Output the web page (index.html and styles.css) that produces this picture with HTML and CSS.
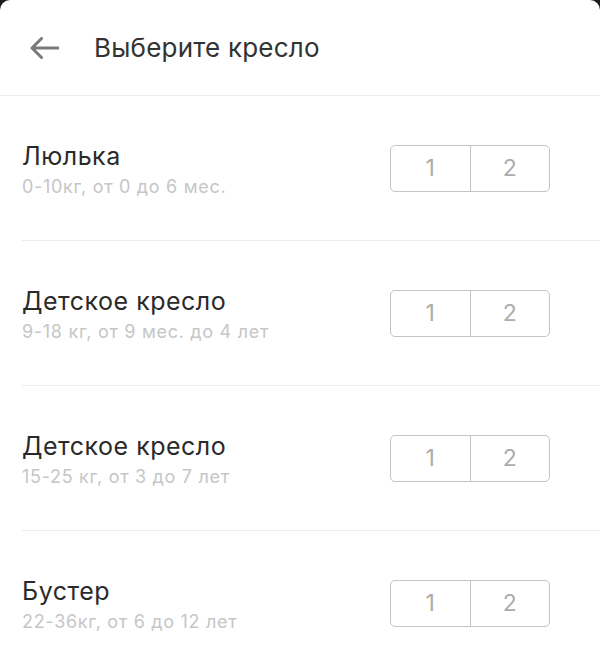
FILE: index.html
```html
<!DOCTYPE html>
<html lang="ru">
<head>
  <meta charset="UTF-8">
  <title>Выберите кресло</title>
  <link rel="stylesheet" href="styles.css">
</head>
<body>
  <div class="sheet">
    <header class="top-bar">
      <button class="back" type="button" aria-label="Назад">
        <svg width="30" height="22" viewBox="0 0 30 22">
          <path d="M29 11H3M12.5 1.5L3 11l9.5 9.5" fill="none" stroke="#7a7a7a" stroke-width="3" stroke-linecap="round" stroke-linejoin="round"/>
        </svg>
      </button>
      <h1>Выберите кресло</h1>
    </header>

    <ul class="seats">
      <li class="seat">
        <div class="seat-info">
          <div class="seat-name">Люлька</div>
          <div class="seat-desc">0-10кг, от 0 до 6 мес.</div>
        </div>
        <div class="counter">
          <button type="button">1</button>
          <button type="button">2</button>
        </div>
      </li>
      <li class="seat">
        <div class="seat-info">
          <div class="seat-name">Детское кресло</div>
          <div class="seat-desc">9-18 кг, от 9 мес. до 4 лет</div>
        </div>
        <div class="counter">
          <button type="button">1</button>
          <button type="button">2</button>
        </div>
      </li>
      <li class="seat">
        <div class="seat-info">
          <div class="seat-name">Детское кресло</div>
          <div class="seat-desc">15-25 кг, от 3 до 7 лет</div>
        </div>
        <div class="counter">
          <button type="button">1</button>
          <button type="button">2</button>
        </div>
      </li>
      <li class="seat">
        <div class="seat-info">
          <div class="seat-name">Бустер</div>
          <div class="seat-desc">22-36кг, от 6 до 12 лет</div>
        </div>
        <div class="counter">
          <button type="button">1</button>
          <button type="button">2</button>
        </div>
      </li>
    </ul>
  </div>
</body>
</html>
```

FILE: styles.css
```css
body {
  margin: 0;
  background: #1c1c1c;
  font-family: Inter, "Liberation Sans", sans-serif;
}
.sheet {
  background: #ffffff;
  min-height: 100vh;
  border-radius: 10px 10px 0 0;
  overflow: hidden;
}
.top-bar {
  display: flex;
  align-items: center;
  height: 96px;
  box-sizing: border-box;
  border-bottom: 1px solid #ececec;
}
.back {
  display: flex;
  align-items: center;
  justify-content: flex-start;
  width: 94px;
  margin: 0;
  padding: 0 0 0 29px;
  box-sizing: border-box;
  background: none;
  border: none;
}
.top-bar h1 {
  margin: 0;
  font-size: 26px;
  font-weight: normal;
  letter-spacing: 0.2px;
  color: #333333;
}
.seats {
  list-style: none;
  margin: 0;
  padding: 0 0 0 22px;
}
.seat {
  display: flex;
  align-items: center;
  justify-content: space-between;
  height: 145px;
  box-sizing: border-box;
  border-bottom: 1px solid #ececec;
  padding-right: 50px;
}
.seat-info {
  margin-top: 3px;
}
.seat-name {
  font-size: 25px;
  line-height: 28px;
  letter-spacing: 0.5px;
  color: #2a2a2a;
}
.seat-desc {
  margin-top: 7.5px;
  font-size: 18px;
  line-height: 20px;
  letter-spacing: 0.7px;
  color: #c6c6c6;
}
.counter {
  display: flex;
  width: 160px;
  height: 47px;
  border: 1.5px solid #c4c4c4;
  border-radius: 5px;
  box-sizing: border-box;
}
.counter button {
  flex: 1;
  margin: 0;
  padding: 0;
  background: none;
  border: none;
  font-family: inherit;
  font-size: 23px;
  color: #acacac;
}
.counter button + button {
  border-left: 1.5px solid #c4c4c4;
}
```
